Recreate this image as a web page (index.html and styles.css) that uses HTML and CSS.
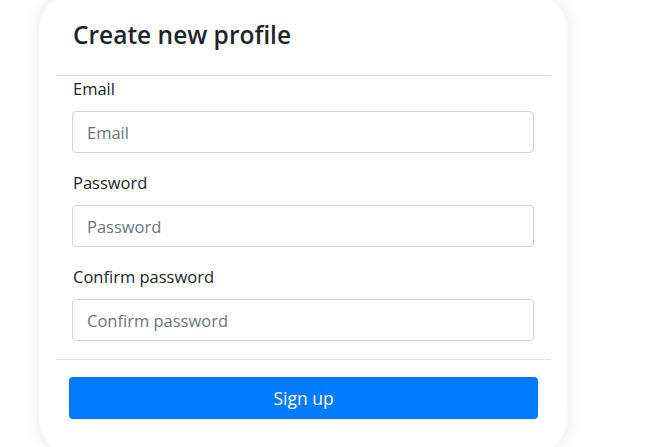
FILE: index.html
```html
<!DOCTYPE html>
<html>
<head>
<meta charset="utf-8">
<link rel="stylesheet" href="styles.css">
</head>
<body>
<div class="card">
  <div class="card-header">
    <h5 class="title">Create new profile</h5>
  </div>
  <form class="card-body">
    <div class="group">
      <label class="label" for="email">Email</label>
      <input class="input" id="email" type="email" placeholder="Email">
    </div>
    <div class="group">
      <label class="label" for="pw">Password</label>
      <input class="input" id="pw" type="password" placeholder="Password">
    </div>
    <div class="group last">
      <label class="label" for="pw2">Confirm password</label>
      <input class="input" id="pw2" type="password" placeholder="Confirm password">
    </div>
  </form>
  <div class="card-footer">
    <button class="btn" type="button">Sign up</button>
  </div>
</div>
</body>
</html>
```

FILE: styles.css
```css
* { box-sizing: border-box; }
html, body { margin: 0; padding: 0; background: #fff; overflow: hidden; }
body {
  font-family: "Open Sans", "Noto Sans", sans-serif;
  color: #212529;
  height: 447px;
}
.card {
  margin: -6px 0 0 39px;
  width: 528px;
  height: 460px;
  border-radius: 35px;
  background: #fff;
  box-shadow: 0 0 18px rgba(0, 0, 0, 0.09);
  padding: 0 16px 0 17px;
}
.card-header {
  padding: 24px 0 24px 17px;
  border-bottom: 1px solid #dee2e6;
}
.title {
  margin: 0;
  font-size: 24.5px;
  font-weight: 600;
  line-height: 33px;
}
.card-body {
  margin: 0;
  padding: 0 17px 18px 16px;
}
.group { margin-bottom: 17px; }
.group.last { margin-bottom: 0; }
.label {
  display: block;
  font-size: 16.5px;
  line-height: 26px;
  margin-bottom: 9px;
  padding-left: 1px;
}
.input {
  display: block;
  width: 100%;
  height: 42px;
  padding: 0 14px;
  font-family: inherit;
  font-size: 16.5px;
  color: #495057;
  background: #fff;
  border: 1px solid #ced4da;
  border-radius: 4px;
  outline: none;
}
.input::placeholder { color: #6c757d; }
.card-footer {
  border-top: 1px solid #dee2e6;
  padding: 17px 13px 0 13px;
}
.btn {
  display: block;
  width: 100%;
  height: 42px;
  border: 0;
  border-radius: 4px;
  background: #007bff;
  color: #fff;
  font-family: inherit;
  font-size: 17.5px;
}
```
